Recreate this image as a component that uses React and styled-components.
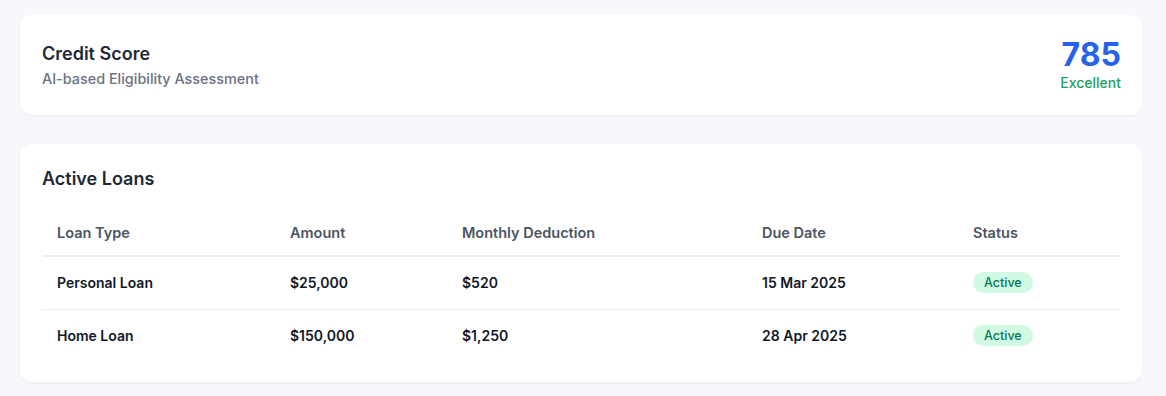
import React from "react";
import styled, { createGlobalStyle } from "styled-components";

const loans = [
  { type: "Personal Loan", amount: "$25,000", monthly: "$520", due: "15 Mar 2025", status: "Active" },
  { type: "Home Loan", amount: "$150,000", monthly: "$1,250", due: "28 Apr 2025", status: "Active" },
];

const App = () => {
  return (
    <>
      <GlobalStyle />
      <Page>
        <Card>
          <ScoreRow>
            <div>
              <Title>Credit Score</Title>
              <Subtitle>AI-based Eligibility Assessment</Subtitle>
            </div>
            <ScoreBox>
              <Score>785</Score>
              <Rating>Excellent</Rating>
            </ScoreBox>
          </ScoreRow>
        </Card>

        <Card loans>
          <Title>Active Loans</Title>
          <Table>
            <colgroup>
              <col style={{ width: 233 }} />
              <col style={{ width: 172 }} />
              <col style={{ width: 300 }} />
              <col style={{ width: 211 }} />
              <col />
            </colgroup>
            <thead>
              <tr>
                <Th>Loan Type</Th>
                <Th>Amount</Th>
                <Th>Monthly Deduction</Th>
                <Th>Due Date</Th>
                <Th>Status</Th>
              </tr>
            </thead>
            <tbody>
              {loans.map((loan, i) => (
                <Tr key={loan.type} last={i === loans.length - 1}>
                  <Td>{loan.type}</Td>
                  <Td>{loan.amount}</Td>
                  <Td>{loan.monthly}</Td>
                  <Td>{loan.due}</Td>
                  <Td>
                    <Badge>{loan.status}</Badge>
                  </Td>
                </Tr>
              ))}
            </tbody>
          </Table>
        </Card>
      </Page>
    </>
  );
};

export default App;

const GlobalStyle = createGlobalStyle`
  body {
    margin: 0;
    background: #f6f8fb;
    font-family: Inter, "Noto Sans", sans-serif;
    color: #111827;
  }
`;

const Page = styled.div`
  display: flex;
  flex-direction: column;
  gap: 29px;
  padding: 15px 24px 16px 20px;
`;

const Card = styled.div`
  background: #fff;
  border-radius: 12px;
  box-shadow: 0 1px 3px rgba(15, 23, 42, 0.06);
  padding: ${(props) => (props.loans ? "23px 21px 20px 22px" : "0 21px 0 22px")};
  height: ${(props) => (props.loans ? "auto" : "100px")};
  box-sizing: border-box;
  display: flex;
  flex-direction: column;
  justify-content: center;
`;

const ScoreRow = styled.div`
  display: flex;
  justify-content: space-between;
  align-items: center;
`;

const Title = styled.div`
  font-size: 18px;
  font-weight: 600;
  line-height: 24px;
  color: #1f2937;
`;

const Subtitle = styled.div`
  font-size: 14.4px;
  font-weight: 500;
  line-height: 18px;
  color: #6b7280;
  margin-top: 4px;
`;

const ScoreBox = styled.div`
  display: flex;
  flex-direction: column;
  align-items: flex-end;
  margin-top: -2px;
`;

const Score = styled.div`
  font-size: 32px;
  font-weight: 700;
  line-height: 36px;
  color: #2563eb;
`;

const Rating = styled.div`
  font-size: 14px;
  font-weight: 500;
  line-height: 18px;
  color: #1f9d63;
  margin-top: 1px;
`;

const Table = styled.table`
  width: 100%;
  border-collapse: collapse;
  table-layout: fixed;
  margin-top: 20px;
`;

const Th = styled.th`
  text-align: left;
  font-size: 14.5px;
  font-weight: 600;
  line-height: 20px;
  color: #4b5563;
  padding: 12px 15px;
  border-bottom: 2px solid #eceef2;
`;

const Tr = styled.tr`
  border-bottom: ${(props) => (props.last ? "none" : "1px solid #eceef2")};
`;

const Td = styled.td`
  font-size: 14px;
  font-weight: 600;
  line-height: 20px;
  color: #111827;
  padding: 15px 15px 16px;
  height: 20px;
`;

const Badge = styled.span`
  display: inline-block;
  background: #d1fae5;
  color: #047857;
  font-size: 12.5px;
  font-weight: 500;
  line-height: 21px;
  padding: 0 11px;
  border-radius: 999px;
`;
